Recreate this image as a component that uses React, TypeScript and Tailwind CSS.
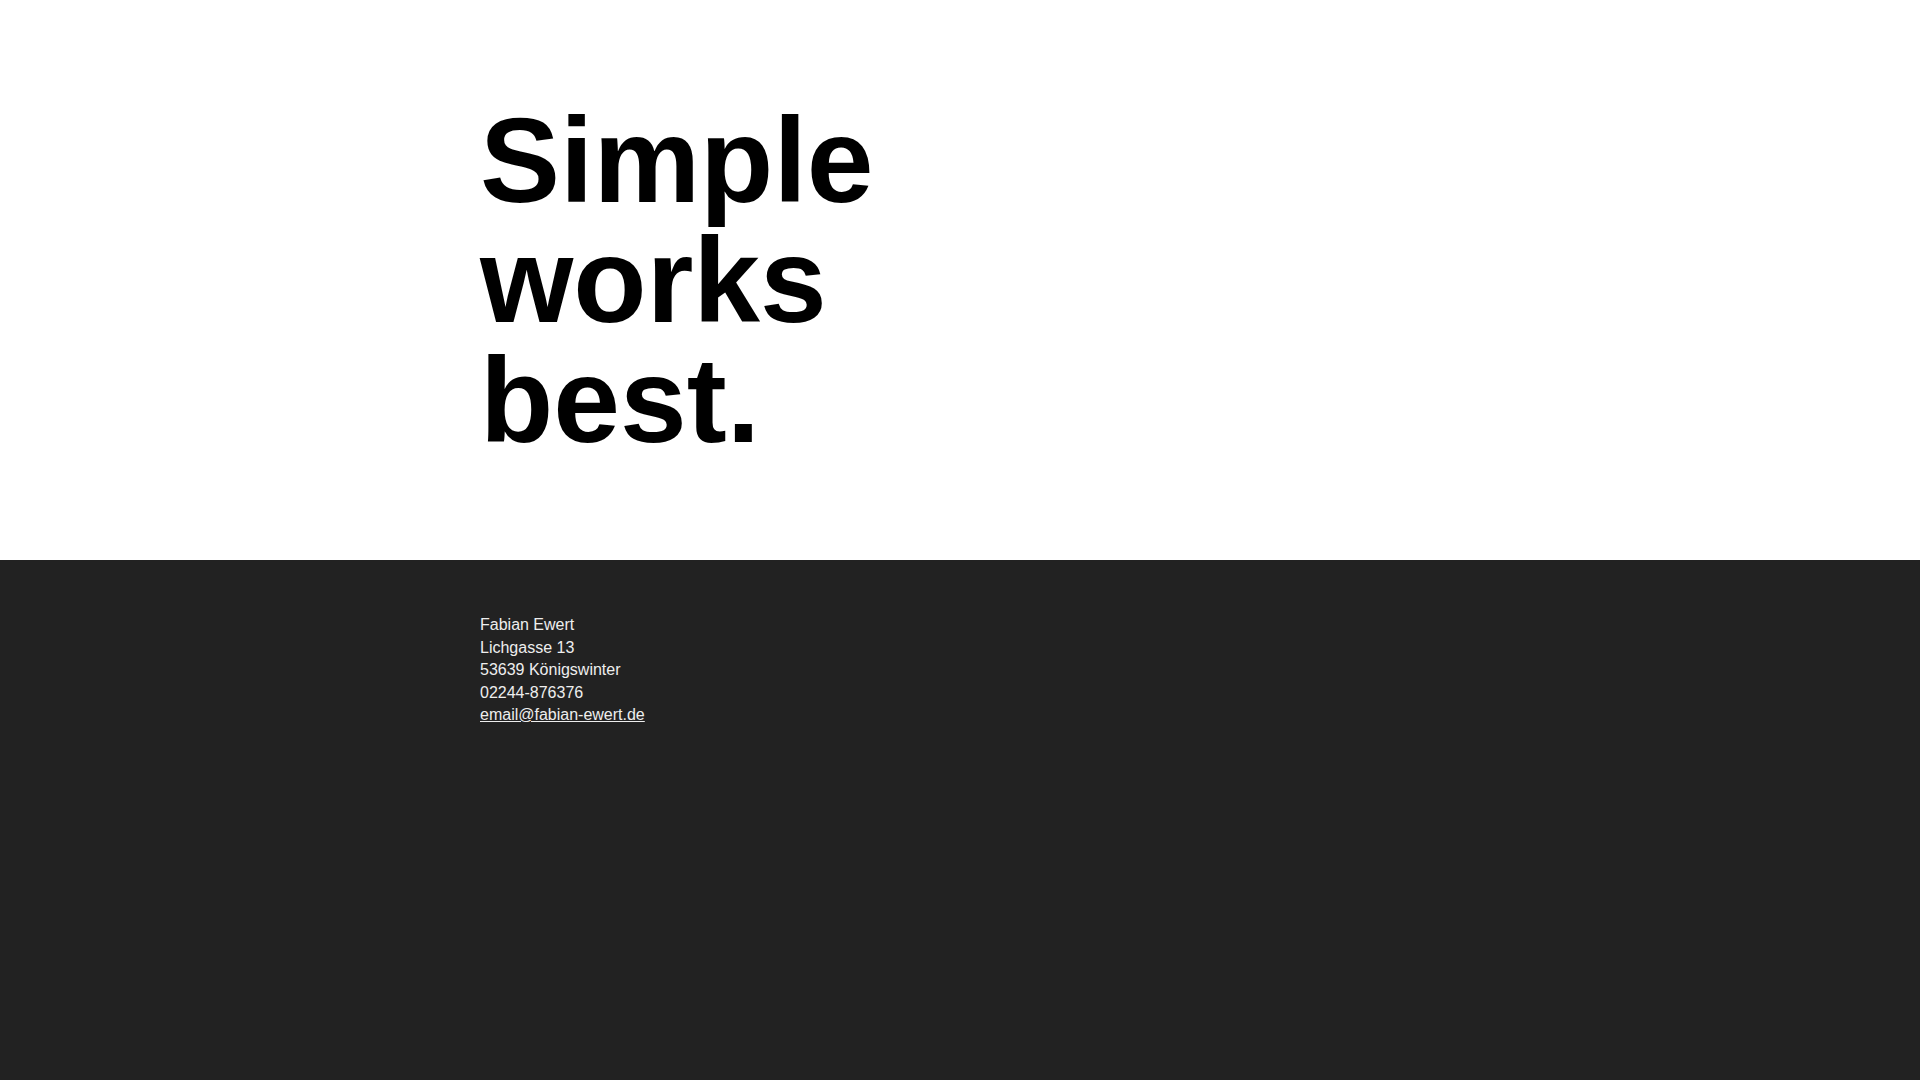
export default function App() {
  return (
    <div className="min-h-screen bg-[#222222] font-['Liberation_Sans',Arial,sans-serif]">
      <header className="bg-white">
        <div className="mx-auto max-w-[960px] py-[100px]">
          <h1 className="text-[120px] font-bold leading-[120px] text-black">
            Simple
            <br />
            works
            <br />
            best.
          </h1>
        </div>
      </header>

      <footer className="mx-auto max-w-[960px] pt-[54px] text-[16px] leading-[22.5px] text-[#eeeeee]">
        <address className="not-italic">
          Fabian Ewert
          <br />
          Lichgasse 13
          <br />
          53639 Königswinter
          <br />
          02244-876376
          <br />
          <a href="mailto:email@fabian-ewert.de" className="underline">
            email@fabian-ewert.de
          </a>
        </address>
      </footer>
    </div>
  );
}
